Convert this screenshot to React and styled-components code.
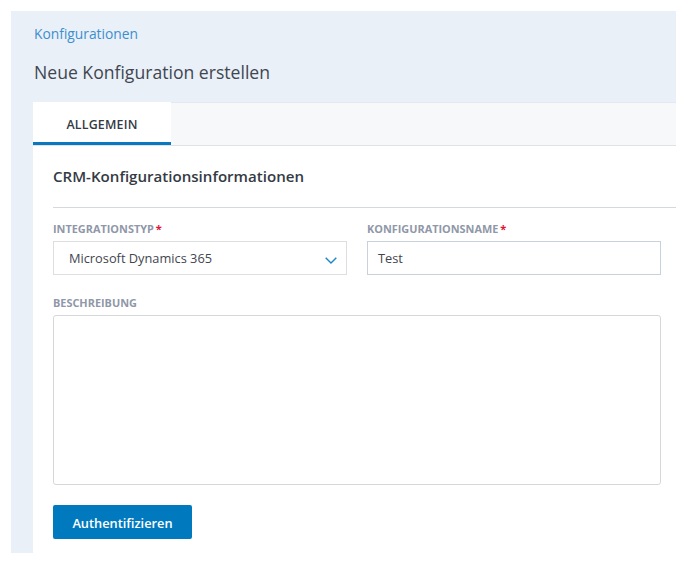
import React from 'react';
import styled, { createGlobalStyle } from 'styled-components';

const GlobalStyle = createGlobalStyle`
    body {
        margin: 0;
        background: #ffffff;
        font-family: "Open Sans", "Liberation Sans", sans-serif;
    }
`;

const Page = styled.div`
    position: relative;
    box-sizing: border-box;
    width: 665px;
    height: 542px;
    margin: 11px 0 0 11px;
    padding-left: 22px;
    background: #e9f0f8;
    display: flex;
    flex-direction: column;
`;

const LeftStub = styled.div`
    position: absolute;
    left: 0;
    top: 542px;
    width: 12px;
    height: 11px;
    background: #e9f0f8;
`;

const Header = styled.header`
    height: 91px;
    flex: none;
    padding: 13px 0 0 1px;
    box-sizing: border-box;
`;

const Breadcrumb = styled.a`
    display: block;
    font-size: 13.8px;
    line-height: 19px;
    color: #3d8fce;
`;

const Title = styled.h1`
    margin: 17px 0 0;
    font-size: 17.6px;
    line-height: 24px;
    font-weight: 400;
    color: #3f4650;
`;

const Card = styled.main`
    flex: 1;
    background: #ffffff;
    display: flex;
    flex-direction: column;
`;

const TabBar = styled.div`
    height: 44px;
    flex: none;
    box-sizing: border-box;
    background: #f7f8fa;
    border-top: 1px solid #e3e9f0;
    border-bottom: 1px solid #dfe3e8;
    display: flex;
`;

const Tab = styled.div`
    width: 138px;
    height: 43px;
    margin-top: -1px;
    box-sizing: border-box;
    padding-top: 4px;
    background: #ffffff;
    border-bottom: 3px solid #0a78c0;
    display: flex;
    align-items: center;
    justify-content: center;
    font-size: 12.4px;
    font-weight: 600;
    letter-spacing: 0.2px;
    color: #333a45;
`;

const Body = styled.section`
    padding: 19px 0 0 20px;
`;

const SectionTitle = styled.h2`
    margin: 0;
    padding-bottom: 20px;
    border-bottom: 1px solid #d5d8dc;
    font-size: 15.1px;
    line-height: 22px;
    font-weight: 600;
    color: #343a44;
`;

const Row = styled.div`
    display: grid;
    grid-template-columns: 294px 294px;
    column-gap: 20px;
    margin-top: 13px;
`;

const Field = styled.div`
    display: flex;
    flex-direction: column;
`;

const Label = styled.label`
    display: block;
    height: 15px;
    margin-bottom: 5px;
    font-size: 10.9px;
    line-height: 15px;
    font-weight: 700;
    color: #8f97a8;
`;

const Star = styled.span`
    margin-left: 2px;
    font-size: 11px;
    color: #e0123a;
`;

const Box = styled.div`
    box-sizing: border-box;
    height: 34px;
    border: 1px solid ${(p) => (p.$strong ? '#c9d1da' : '#dcdee0')};
    background: #ffffff;
    display: flex;
    align-items: center;
    justify-content: space-between;
    padding: 0 9px 0 ${(p) => p.$indent}px;
    font-size: 12.8px;
    color: #3f4650;
`;

const Chevron = styled.svg`
    width: 12px;
    height: 7px;
    margin-top: 4px;
    fill: none;
    stroke: #1c86c8;
    stroke-width: 1.4;
`;

const DescField = styled(Field)`
    margin-top: 20px;
    width: 608px;
`;

const TextArea = styled.div`
    box-sizing: border-box;
    height: 170px;
    border: 1px solid #d5d7d9;
    border-radius: 3px;
    background: #ffffff;
`;

const AuthButton = styled.button`
    display: block;
    width: 139px;
    height: 34px;
    margin-top: 20px;
    padding: 1px 0 0;
    border: none;
    border-radius: 2px;
    background: #0079bf;
    color: #ffffff;
    font-family: inherit;
    font-size: 12.8px;
    font-weight: 600;
`;

const App = () => (
    <>
        <GlobalStyle />
        <Page>
            <LeftStub />
            <Header>
                <Breadcrumb>Konfigurationen</Breadcrumb>
                <Title>Neue Konfiguration erstellen</Title>
            </Header>
            <Card>
                <TabBar>
                    <Tab>ALLGEMEIN</Tab>
                </TabBar>
                <Body>
                    <SectionTitle>CRM-Konfigurationsinformationen</SectionTitle>
                    <Row>
                        <Field>
                            <Label>INTEGRATIONSTYP<Star>*</Star></Label>
                            <Box $indent={15}>
                                Microsoft Dynamics 365
                                <Chevron viewBox="0 0 12 7">
                                    <path d="M.7.7 6 6 11.3.7" />
                                </Chevron>
                            </Box>
                        </Field>
                        <Field>
                            <Label>KONFIGURATIONSNAME<Star>*</Star></Label>
                            <Box $indent={10} $strong>Test</Box>
                        </Field>
                    </Row>
                    <DescField>
                        <Label>BESCHREIBUNG</Label>
                        <TextArea />
                    </DescField>
                    <AuthButton>Authentifizieren</AuthButton>
                </Body>
            </Card>
        </Page>
    </>
);

export default App;
